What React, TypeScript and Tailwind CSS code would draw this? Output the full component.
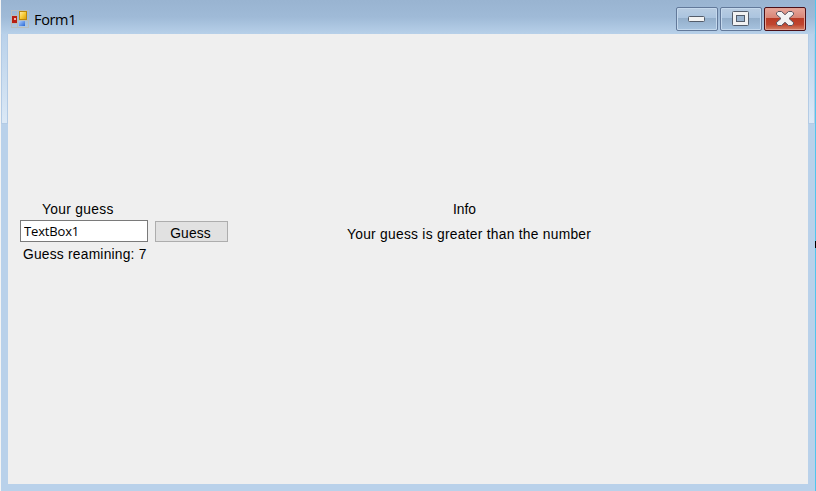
import React from "react";

function AppIcon() {
  return (
    <svg width="18" height="18" viewBox="0 0 18 18" shapeRendering="crispEdges">
      <defs>
        <linearGradient id="gold" x1="0" y1="0" x2="1" y2="1">
          <stop offset="0" stopColor="#ffe9a0" />
          <stop offset="0.5" stopColor="#f8cc38" />
          <stop offset="1" stopColor="#dca010" />
        </linearGradient>
        <linearGradient id="azure" x1="0" y1="0" x2="1" y2="1">
          <stop offset="0" stopColor="#a8ccff" />
          <stop offset="1" stopColor="#2867d4" />
        </linearGradient>
      </defs>
      <path d="M.5 .5H17.5V17.5H.5ZM6.500 .5V17.500M.5 5.500H6.500M.5 13.500H6.500M6.500 10.500H17.500" fill="none" stroke="#b9bdbb" />
      <rect x="1" y="6" width="5" height="7" fill="#b81f12" />
      <rect x="3" y="8" width="2" height="2" fill="#f7b3a2" />
      <rect x="8" y="1" width="8" height="9" fill="#bd8708" />
      <rect x="9" y="2" width="6" height="7" fill="url(#gold)" />
      <rect x="8" y="11" width="6" height="5" fill="url(#azure)" />
    </svg>
  );
}

const buttonBase = "flex h-6 items-center justify-center rounded-[2px] border";
const blueGlass =
  "w-[42px] border-[#62799a] bg-[linear-gradient(#b9cde2_0%,#abc4df_44%,#93aeca_46%,#a7c3df_100%)] shadow-[inset_0_0_0_1px_#c5d9ed]";

function WindowButtons() {
  return (
    <div className="mt-[7px] flex gap-[2px]">
      <div className={`${buttonBase} ${blueGlass}`}>
        <svg width="18" height="8" viewBox="0 0 18 8">
          <rect x=".5" y="1.500" width="16" height="5" rx="1" fill="#f2f2f2" stroke="#535c6a" />
        </svg>
      </div>
      <div className={`${buttonBase} ${blueGlass}`}>
        <svg width="18" height="16" viewBox="0 0 18 16">
          <rect x=".5" y=".5" width="16" height="14" rx="1" fill="#f2f2f2" stroke="#535c6a" />
          <rect x="4.500" y="4.500" width="8" height="6" fill="#9cb5cf" stroke="#535c6a" />
        </svg>
      </div>
      <div
        className={`${buttonBase} w-[42px] border-[#4b1018] bg-[linear-gradient(#e7a79b_0%,#d98677_44%,#b93b25_46%,#c0452f_75%,#d48468_100%)] shadow-[inset_0_0_0_1px_#e3a293]`}
      >
        <svg width="18" height="16" viewBox="0 0 18 16">
          <path
            d="M2 .5H5.500L9 3.700L12.500 .5H16L17.500 2V3.500L13 7.500L17.500 11.500V13L16 14.500H12.500L9 11.300L5.500 14.500H2L.5 13V11.500L5 7.500L.5 3.500V2Z"
            fill="#f2f2f2"
            stroke="#59535e"
          />
        </svg>
      </div>
    </div>
  );
}

function SideFrame() {
  return (
    <div className="flex w-[7px] shrink-0 flex-col bg-[#b9d1ea]">
      <div className="h-[90px] border-x border-b border-[#b3cbe5] bg-[linear-gradient(#b9d1ea,#dce9f6)]" />
    </div>
  );
}

export default function App() {
  return (
    <div className="flex h-[491px] w-[816px] overflow-hidden bg-[#f4f4f4] font-['Liberation_Sans',Arial,sans-serif] text-[13.8px] leading-4 text-black">
      <div className="ml-px flex w-[814px] flex-col bg-[#b9d1ea]">
        <header className="flex h-[34px] shrink-0 justify-between bg-[linear-gradient(#99b4d1,#9fbad7_50%,#b7d0e9)] pr-[9px] pl-[10px]">
          <div className="flex gap-[5px] pt-[10px]">
            <AppIcon />
            <span className="pt-px font-['Open_Sans','Noto_Sans',sans-serif] text-[14.5px] leading-[18px] tracking-[-0.35px]">Form1</span>
          </div>
          <WindowButtons />
        </header>
        <div className="flex h-[450px]">
          <SideFrame />
          <main className="flex w-[800px] bg-[#efefef]">
            <section className="ml-3 w-[208px] pt-[168px]">
              <div className="pl-[22px] tracking-[0.33px]">Your guess</div>
              <div className="mt-[2px] flex gap-[7px]">
                <input
                  aria-label="Your guess"
                  defaultValue="TextBox1"
                  className="h-[22px] w-[128px] border border-[#7a7a7a] bg-white pl-[3px] font-['Open_Sans','Noto_Sans',sans-serif] text-[13px] tracking-[-0.15px] outline-none"
                />
                <button className="mt-px h-[21px] w-[73px] border border-[#adadad] bg-[#e1e1e1] pt-[4px] pr-[2px] leading-4 tracking-[0.12px]">
                  Guess
                </button>
              </div>
              <div className="mt-[5px] pl-[3px] tracking-[0.22px] whitespace-nowrap">Guess reamining: 7</div>
            </section>
            <section className="ml-[119px] pt-[168px]">
              <div className="pl-[106px]">Info</div>
              <div className="mt-[9px] tracking-[0.27px] whitespace-nowrap">Your guess is greater than the number</div>
            </section>
          </main>
          <SideFrame />
        </div>
      </div>
      <div className="flex w-px flex-col bg-[#50c5ed] pt-[241px]">
        <div className="h-[7px] bg-black" />
      </div>
    </div>
  );
}
